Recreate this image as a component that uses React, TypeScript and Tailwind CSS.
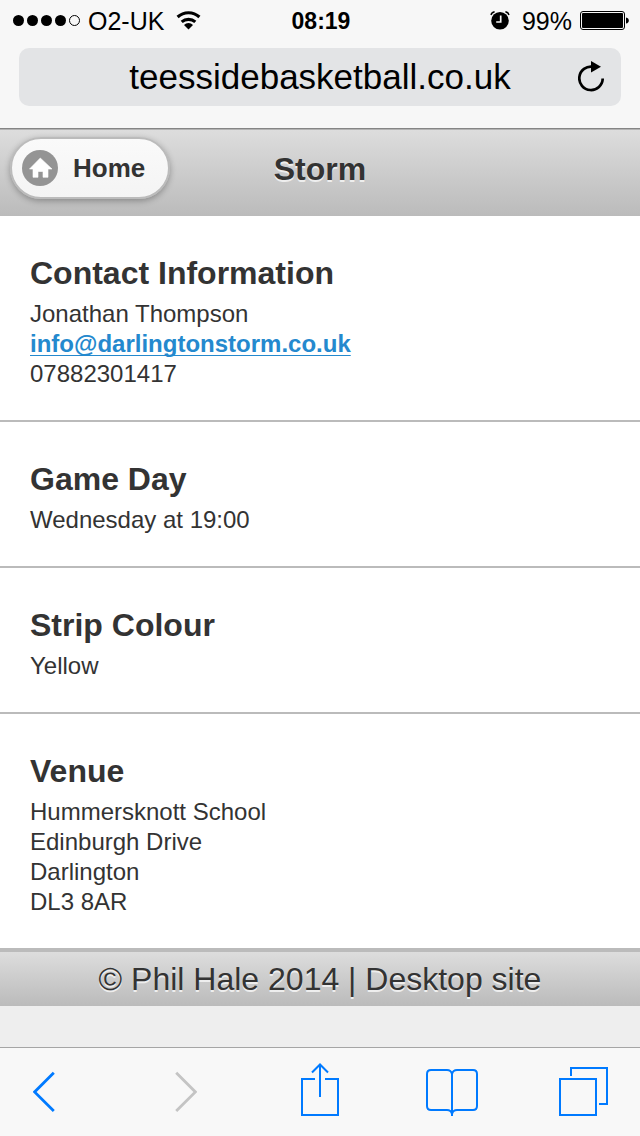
import type { ReactNode } from 'react';

function StatusBar() {
  return (
    <div className="grid h-10 grid-cols-[1fr_auto_1fr] items-center pt-px pr-[11px] pl-[13px] text-[25px] leading-10 text-black">
      <div className="flex items-center gap-2">
        <svg width="67" height="14" viewBox="0 0 67 14" aria-label="Signal strength">
          <circle cx="5.5" cy="6.5" r="5.5" />
          <circle cx="19.5" cy="6.5" r="5.5" />
          <circle cx="33.5" cy="6.5" r="5.5" />
          <circle cx="47.5" cy="6.5" r="5.5" />
          <circle cx="61.5" cy="6.5" r="5" fill="none" stroke="black" strokeWidth="1" />
        </svg>
        <span>O2-UK</span>
        <svg className="ml-1" width="26" height="20" viewBox="0 0 26 20" aria-label="Wi-Fi">
          <path d="M1.6 6A16 16 0 0 1 23.4 6M5.7 10.9A10.3 10.3 0 0 1 19.3 10.9" fill="none" stroke="black" strokeWidth="3.1" />
          <path d="M12.5 18.4L8 13.9A6.4 6.4 0 0 1 17 13.9Z" />
        </svg>
      </div>
      <time className="text-[23px] font-bold">08:19</time>
      <div className="flex items-center justify-end gap-2">
        <svg className="mr-1" width="20" height="20" viewBox="0 0 20 20" aria-label="Alarm set">
          <circle cx="10" cy="9.8" r="8.8" />
          <path d="M1 4Q1.6 1.4 4.6 0.8M15.4 0.8Q18.4 1.4 19 4" fill="none" stroke="black" strokeWidth="1.4" />
          <path d="M10.7 4.5V11H6.2" fill="none" stroke="#f7f7f7" strokeWidth="1.7" />
        </svg>
        <span>99%</span>
        <svg width="49" height="20" viewBox="0 0 49 20" aria-label="Battery">
          <rect x="0.5" y="0.5" width="44" height="18" rx="2.5" fill="none" stroke="black" />
          <rect x="2" y="2" width="41" height="15" rx="1" />
          <path d="M46 6.5Q48.8 7 48.8 9.5T46 12.5Z" />
        </svg>
      </div>
    </div>
  );
}

function AddressBar() {
  return (
    <div className="px-[19px] pt-2 pb-[22px]">
      <div className="grid h-[58px] grid-cols-[44px_1fr_44px] items-center rounded-[10px] bg-[#e3e4e6] px-2">
        <span />
        <span className="text-center text-[35px] leading-[58px] text-black">teessidebasketball.co.uk</span>
        <button type="button" aria-label="Reload" className="flex justify-center">
          <svg width="26" height="32" viewBox="0 0 26 32">
            <path d="M15 5.8A11.7 11.7 0 1 0 24.7 17.5" fill="none" stroke="black" strokeWidth="2.7" />
            <path d="M13 0L23 5.8L13 11.6Z" />
          </svg>
        </button>
      </div>
    </div>
  );
}

function Section({ title, children }: { title: string; children: ReactNode }) {
  return (
    <section className="border-b-2 border-[#bbb] px-[30px] pt-9 pb-[31px] last:border-b-0">
      <h2 className="mb-[5px] text-[32px] leading-[42px] font-bold">{title}</h2>
      <div className="text-[24px] leading-[30px]">{children}</div>
    </section>
  );
}

function Toolbar() {
  return (
    <nav
      aria-label="Browser"
      className="grid h-[89px] grid-cols-[142fr_126fr_125fr_133fr_49px] items-center justify-items-start border-t border-[#a5a5a5] bg-[#f8f8f8] pr-8 pb-1 pl-[33px] text-[#007aff]"
    >
      <button type="button" aria-label="Back">
        <svg width="22" height="54" viewBox="0 0 22 54" fill="none" stroke="currentColor" strokeWidth="2.8">
          <path d="M20.8 9.7L1.6 28.9L20.8 48.1" />
        </svg>
      </button>
      <button type="button" aria-label="Forward" disabled className="text-[#c4c4c4]">
        <svg width="22" height="54" viewBox="0 0 22 54" fill="none" stroke="currentColor" strokeWidth="2.8">
          <path d="M1.2 9.7L20.4 28.9L1.2 48.1" />
        </svg>
      </button>
      <button type="button" aria-label="Share">
        <svg width="38" height="54" viewBox="0 0 38 54" fill="none" stroke="currentColor" strokeWidth="2">
          <path d="M14 16H1V52H37V16H24M19 34V1.5M11 9.5L19 1.5L27 9.5" />
        </svg>
      </button>
      <button type="button" aria-label="Bookmarks">
        <svg width="52" height="54" viewBox="0 0 52 54" fill="none" stroke="currentColor" strokeWidth="2">
          <path d="M26 53V11Q25 7 21 7H5Q1 7 1 11V43Q1 47 5 47H21Q25 47 26 51Q27 47 31 47H47Q51 47 51 43V11Q51 7 47 7H31Q27 7 26 11" />
        </svg>
      </button>
      <button type="button" aria-label="Tabs">
        <svg width="49" height="54" viewBox="0 0 49 54" fill="none" stroke="currentColor" strokeWidth="2">
          <path d="M1 16H37V52H1ZM12 13V5H48V41H40" />
        </svg>
      </button>
    </nav>
  );
}

export default function App() {
  return (
    <div className="flex min-h-screen flex-col bg-[#eee] font-['Liberation_Sans',Arial,sans-serif] text-[#333]">
      <div className="border-b border-[#858585] bg-[#f7f7f7]">
        <StatusBar />
        <AddressBar />
      </div>
      <header className="grid h-[87px] grid-cols-[1fr_auto_1fr] items-start border-t border-[#b3b3b3] bg-linear-to-b from-[#ddd] to-[#bbb] pt-[7px]">
        <a
          href="#home"
          className="ml-[10px] flex h-[62px] w-40 items-center gap-[15px] justify-self-start rounded-full border-2 border-[#bbb] bg-linear-to-b from-[#fafafa] to-[#f4f4f4] pl-[10px] text-[26px] font-bold shadow-[0_2px_6px_rgba(0,0,0,0.3)]"
        >
          <svg width="36" height="36" viewBox="0 0 36 36" aria-hidden="true">
            <circle cx="18" cy="18" r="18" fill="#949494" />
            <path d="M18.3 8L30 19H26V27.3H21V21.5H16V27.3H11V19H7.5Z" fill="white" stroke="white" strokeWidth="0.6" strokeLinejoin="round" />
          </svg>
          Home
        </a>
        <h1 className="pt-3 text-[32px] leading-10 font-bold [text-shadow:0_2px_0_#eee]">Storm</h1>
      </header>
      <main className="bg-white">
        <Section title="Contact Information">
          <p>Jonathan Thompson</p>
          <p>
            <a
              href="mailto:info@darlingtonstorm.co.uk"
              className="font-bold text-[#2489ce] underline decoration-1 underline-offset-[3px] [text-decoration-skip-ink:none]"
            >
              info@darlingtonstorm.co.uk
            </a>
          </p>
          <p>07882301417</p>
        </Section>
        <Section title="Game Day">
          <p>Wednesday at 19:00</p>
        </Section>
        <Section title="Strip Colour">
          <p>Yellow</p>
        </Section>
        <Section title="Venue">
          <address className="not-italic">
            <p>Hummersknott School</p>
            <p>Edinburgh Drive</p>
            <p>Darlington</p>
            <p>DL3 8AR</p>
          </address>
        </Section>
      </main>
      <footer className="border-t-4 border-[#bbb] bg-linear-to-b from-[#ddd] to-[#bbb] text-center text-[32px] leading-[54px] [text-shadow:0_2px_0_#eee]">
        © Phil Hale 2014 | <a href="#desktop">Desktop site</a>
      </footer>
      <div className="flex-1" />
      <Toolbar />
    </div>
  );
}
